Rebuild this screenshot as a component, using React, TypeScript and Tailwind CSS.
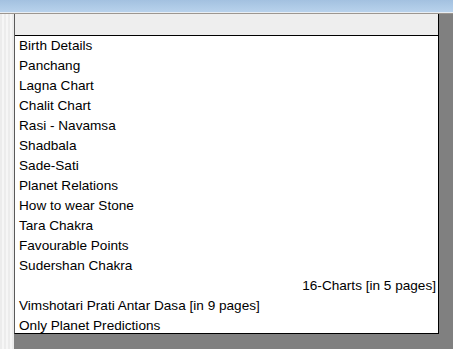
import React from "react";

const items: { t: string; right?: boolean }[] = [
  { t: "Birth Details" },
  { t: "Panchang" },
  { t: "Lagna Chart" },
  { t: "Chalit Chart" },
  { t: "Rasi - Navamsa" },
  { t: "Shadbala" },
  { t: "Sade-Sati" },
  { t: "Planet Relations" },
  { t: "How to wear Stone" },
  { t: "Tara Chakra" },
  { t: "Favourable Points" },
  { t: "Sudershan Chakra" },
  { t: "16-Charts [in 5 pages]", right: true },
  { t: "Vimshotari Prati Antar Dasa [in 9 pages]" },
  { t: "Only Planet Predictions" },
];

export default function App() {
  return (
    <div
      className="w-[453px] h-[349px] overflow-hidden flex flex-col bg-[#808080]"
      style={{ fontFamily: '"Liberation Sans", Arial, sans-serif' }}
    >
      <div className="h-[12px] shrink-0 bg-gradient-to-b from-[#a3c1e0] to-[#b8d2ec]" />
      <div className="h-[1px] shrink-0 bg-[#e8eef4]" />
      <div className="h-[1px] shrink-0 bg-[#9c9690]" />
      <div className="flex flex-1">
        <div className="w-[14px] shrink-0 bg-[repeating-linear-gradient(90deg,#ececec_0px,#ececec_2px,#f6f6f6_2px,#f6f6f6_4px)]" />
        <div className="flex flex-col">
          <div className="w-[425px] h-[320px] bg-white border-l border-l-[#5a5a5a] border-r border-r-black border-b border-b-black flex flex-col">
            <div className="h-[22px] shrink-0 bg-[#eeeeee] border-b border-b-black" />
            <div className="flex flex-col">
              {items.map((it) => (
                <div
                  key={it.t}
                  className={`h-[20px] flex items-center text-[13.6px] text-black leading-none ${
                    it.right ? "justify-end pr-[2px]" : "pl-[4px]"
                  }`}
                >
                  {it.t}
                </div>
              ))}
            </div>
          </div>
        </div>
      </div>
    </div>
  );
}
